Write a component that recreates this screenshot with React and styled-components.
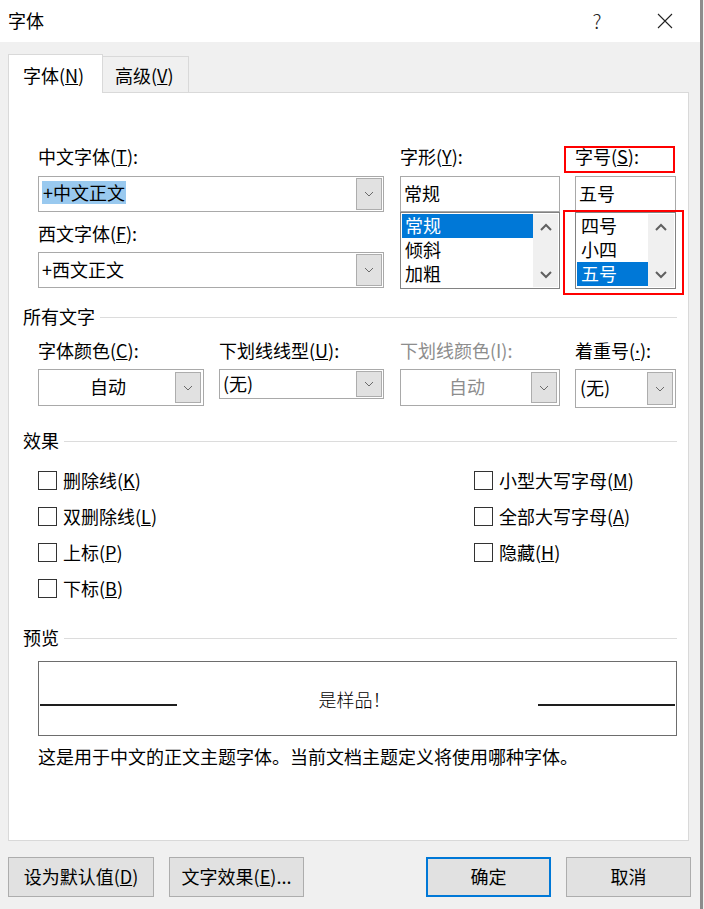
import React from "react";
import styled, { createGlobalStyle } from "styled-components";

const GlobalStyle = createGlobalStyle`
  html, body {
    margin: 0;
    padding: 0;
    background: #f0f0f0;
  }
  * {
    box-sizing: border-box;
  }
  body {
    font-family: "Noto Sans CJK SC", "Noto Sans", sans-serif;
    font-size: 18px;
    color: #000;
  }
`;

const Dialog = styled.div`
  width: 703px;
  height: 909px;
  background: #f0f0f0;
  border-right: 3px solid #8c8c8c;
  display: flex;
  flex-direction: column;
`;

const TitleBar = styled.div`
  height: 42px;
  background: #fff;
  display: flex;
  align-items: center;
  padding-left: 8px;
  line-height: 24px;
`;

const TitleText = styled.span`
  flex: 1;
  margin-top: -2px;
`;

const TitleButton = styled.div`
  width: ${({ $w }) => $w}px;
  display: flex;
  justify-content: center;
  align-items: center;
  font-size: 20px;
  font-weight: 300;
  color: #222;
  margin-right: ${({ $mr }) => $mr || 0}px;
`;

const TabRow = styled.div`
  display: flex;
  align-items: flex-end;
  height: 38px;
  margin-top: 12px;
  padding-left: 8px;
`;

const Tab = styled.div`
  position: relative;
  z-index: ${({ $active }) => ($active ? 1 : 0)};
  width: ${({ $active }) => ($active ? 95 : 86)}px;
  height: ${({ $active }) => ($active ? 39 : 36)}px;
  margin-bottom: ${({ $active }) => ($active ? -1 : 0)}px;
  background: ${({ $active }) => ($active ? "#fff" : "#f0f0f0")};
  border: 1px solid #d9d9d9;
  border-bottom: none;
  border-left: ${({ $active }) => ($active ? "1px solid #d9d9d9" : "none")};
  padding-top: ${({ $active }) => ($active ? 8 : 6)}px;
  padding-left: ${({ $active }) => ($active ? 14 : 12)}px;
  line-height: 24px;
`;

const Panel = styled.div`
  margin-left: 8px;
  width: 681px;
  height: 749px;
  background: #fff;
  border: 1px solid #d9d9d9;
  padding: 53px 11px 0 14px;
  display: flex;
  flex-direction: column;
`;

const Indent = styled.div`
  padding-left: 15px;
  margin-top: ${({ $mt }) => $mt || 0}px;
`;

const FontRow = styled.div`
  display: flex;
  align-items: flex-start;
`;

const Column = styled.div`
  position: relative;
  width: ${({ $w }) => $w}px;
  margin-right: ${({ $mr }) => $mr || 0}px;
  display: flex;
  flex-direction: column;
`;

const Label = styled.div`
  height: 24px;
  line-height: 20px;
  white-space: nowrap;
  color: ${({ $disabled }) => ($disabled ? "#8d8d8d" : "#000")};
  margin-top: ${({ $mt }) => $mt || 0}px;
  margin-bottom: ${({ $mb }) => $mb || 0}px;
`;

const Dot = styled.span`
  font-family: "Noto Sans", "DejaVu Sans", sans-serif;
  text-decoration: underline;
`;

const Combo = styled.div`
  height: ${({ $h }) => $h || 36}px;
  width: 100%;
  border: 1px solid #a9a9a9;
  background: #fff;
  display: flex;
  align-items: stretch;
  padding: ${({ $pad }) => $pad || 1}px;
  margin-top: ${({ $mt }) => $mt || 0}px;
`;

const ComboText = styled.div`
  flex: 1;
  display: flex;
  align-items: center;
  justify-content: ${({ $center }) => ($center ? "center" : "flex-start")};
  padding-left: ${({ $center }) => ($center ? 0 : 2)}px;
  padding-bottom: 3px;
  color: ${({ $disabled }) => ($disabled ? "#8d8d8d" : "#000")};
  line-height: 24px;
  white-space: nowrap;
`;

const Selected = styled.span`
  background: #99c9ef;
  padding: 0 1px;
  line-height: 23px;
`;

const DropButton = styled.div`
  width: 26px;
  background: #e1e1e1;
  border: 1px solid #adadad;
  display: flex;
  align-items: center;
  justify-content: center;
`;

const EditBox = styled.div`
  height: 36px;
  border: 1px solid #a9a9a9;
  background: #fff;
  display: flex;
  align-items: center;
  padding-left: ${({ $pl }) => $pl}px;
  padding-bottom: 3px;
  margin-top: 6px;
  line-height: 24px;
`;

const ListBox = styled.div`
  height: 77px;
  border: 1px solid #828282;
  background: #fff;
  padding: 1px;
  display: flex;
`;

const ListItems = styled.div`
  flex: 1;
  display: flex;
  flex-direction: column;
`;

const ListItem = styled.div`
  height: 24px;
  line-height: 22px;
  padding-left: ${({ $pl }) => $pl}px;
  background: ${({ $sel }) => ($sel ? "#0078d7" : "transparent")};
  color: ${({ $sel }) => ($sel ? "#fff" : "#000")};
`;

const ScrollBar = styled.div`
  width: ${({ $w }) => $w}px;
  background: #f0f0f0;
  display: flex;
  flex-direction: column;
  justify-content: space-between;
  align-items: center;
  padding: 9px 0 8px;
`;

const RedMark = styled.div`
  position: absolute;
  left: ${({ $l }) => $l}px;
  top: ${({ $t }) => $t}px;
  width: ${({ $w }) => $w}px;
  height: ${({ $h }) => $h}px;
  border: 2px solid #ff0000;
  pointer-events: none;
`;

const Heading = styled.div`
  display: flex;
  align-items: center;
  height: 24px;
  line-height: 20px;
  margin-top: ${({ $mt }) => $mt}px;
`;

const HeadingRule = styled.div`
  flex: 1;
  height: 1px;
  background: #dcdcdc;
  margin-left: 5px;
  margin-top: 2px;
`;

const OptionRow = styled.div`
  display: flex;
  align-items: flex-start;
`;

const OptionCol = styled.div`
  width: ${({ $w }) => $w}px;
  margin-right: ${({ $mr }) => $mr || 0}px;
  display: flex;
  flex-direction: column;
`;

const CheckGrid = styled.div`
  display: flex;
  margin-top: 10px;
`;

const CheckColumn = styled.div`
  width: ${({ $w }) => $w || "auto"};
  display: flex;
  flex-direction: column;
`;

const CheckRow = styled.label`
  height: 36px;
  display: flex;
  align-items: center;
  line-height: 24px;
`;

const CheckBox = styled.span`
  width: 19px;
  height: 19px;
  border: 1px solid #333;
  background: #fff;
  margin-right: 6px;
  flex-shrink: 0;
`;

const PreviewBox = styled.div`
  margin-top: 12px;
  height: 75px;
  border: 1px solid #6d6d6d;
  display: flex;
  align-items: center;
  padding: 0 1px;
`;

const PreviewRule = styled.div`
  width: 137px;
  height: 2px;
  background: #1e1e1e;
  margin-top: 12px;
`;

const PreviewText = styled.div`
  flex: 1;
  text-align: center;
  font-weight: 300;
  line-height: 24px;
  padding-right: 6px;
`;

const Description = styled.div`
  margin-top: 9px;
  line-height: 22px;
  white-space: nowrap;
`;

const Footer = styled.div`
  display: flex;
  margin-top: 16px;
  padding: 0 0 0 8px;
`;

const Button = styled.div`
  width: ${({ $w }) => $w}px;
  height: 40px;
  background: #e1e1e1;
  border: ${({ $primary }) => ($primary ? "2px solid #0078d7" : "1px solid #adadad")};
  display: flex;
  align-items: center;
  justify-content: center;
  line-height: 24px;
  padding-bottom: 2px;
  margin-right: ${({ $mr }) => $mr || 0}px;
  white-space: nowrap;
`;

const Chevron = () => (
  <svg width="10" height="6" viewBox="0 0 10 6">
    <polyline points="1,1 5,5 9,1" fill="none" stroke="#6a6a6a" strokeWidth="1" />
  </svg>
);

const ScrollArrow = ({ up }) => (
  <svg width="12" height="8" viewBox="0 0 12 8">
    <polyline
      points={up ? "1,7 6,2 11,7" : "1,1 6,6 11,1"}
      fill="none"
      stroke="#606060"
      strokeWidth="2"
    />
  </svg>
);

const CloseIcon = () => (
  <svg width="16" height="16" viewBox="0 0 16 16">
    <path d="M1 1 L15 15 M15 1 L1 15" stroke="#222" strokeWidth="1.1" fill="none" />
  </svg>
);

const Select = ({ children, h, center, disabled, pad, mt }) => (
  <Combo $h={h} $pad={pad} $mt={mt}>
    <ComboText $center={center} $disabled={disabled}>
      {children}
    </ComboText>
    <DropButton>
      <Chevron />
    </DropButton>
  </Combo>
);

const List = ({ items, selected, pl, bar }) => (
  <ListBox>
    <ListItems>
      {items.map((it) => (
        <ListItem key={it} $sel={it === selected} $pl={pl}>
          {it}
        </ListItem>
      ))}
    </ListItems>
    <ScrollBar $w={bar}>
      <ScrollArrow up />
      <ScrollArrow />
    </ScrollBar>
  </ListBox>
);

const Check = ({ children }) => (
  <CheckRow>
    <CheckBox />
    <span>{children}</span>
  </CheckRow>
);

export default function App() {
  return (
    <>
      <GlobalStyle />
      <Dialog>
        <TitleBar>
          <TitleText>字体</TitleText>
          <TitleButton $w={20} $mr={50}>?</TitleButton>
          <TitleButton $w={16} $mr={27}>
            <CloseIcon />
          </TitleButton>
        </TitleBar>

        <TabRow>
          <Tab $active>
            字体(<u>N</u>)
          </Tab>
          <Tab>
            高级(<u>V</u>)
          </Tab>
        </TabRow>

        <Panel>
          <Indent>
            <FontRow>
              <Column $w={346} $mr={16}>
                <Label $mb={6}>
                  中文字体(<u>T</u>):
                </Label>
                <Select>
                  <Selected>+中文正文</Selected>
                </Select>
                <Label $mt={11} $mb={5}>
                  西文字体(<u>F</u>):
                </Label>
                <Select>+西文正文</Select>
              </Column>

              <Column $w={160} $mr={15}>
                <Label>
                  字形(<u>Y</u>):
                </Label>
                <EditBox $pl={3}>常规</EditBox>
                <List items={["常规", "倾斜", "加粗"]} selected="常规" pl={3} bar={25} />
              </Column>

              <Column $w={101}>
                <Label>
                  字号(<u>S</u>):
                </Label>
                <EditBox $pl={3}>五号</EditBox>
                <List items={["四号", "小四", "五号"]} selected="五号" pl={4} bar={26} />
                <RedMark $l={-11} $t={0} $w={111} $h={27} />
                <RedMark $l={-12} $t={64} $w={121} $h={85} />
              </Column>
            </FontRow>
          </Indent>

          <Heading $mt={15}>
            所有文字
            <HeadingRule />
          </Heading>

          <Indent $mt={12}>
            <OptionRow>
              <OptionCol $w={166} $mr={15}>
                <Label $mb={5}>
                  字体颜色(<u>C</u>):
                </Label>
                <Select h={37} center pad={2}>
                  自动
                </Select>
              </OptionCol>
              <OptionCol $w={165} $mr={16}>
                <Label $mb={5}>
                  下划线线型(<u>U</u>):
                </Label>
                <Select h={30}>(无)</Select>
              </OptionCol>
              <OptionCol $w={160} $mr={15}>
                <Label $mb={5} $disabled>
                  下划线颜色(I):
                </Label>
                <Select h={37} center disabled pad={2}>
                  自动
                </Select>
              </OptionCol>
              <OptionCol $w={101}>
                <Label $mb={5}>
                  着重号(<Dot>·</Dot>):
                </Label>
                <Select h={39} pad={2}>
                  (无)
                </Select>
              </OptionCol>
            </OptionRow>
          </Indent>

          <Heading $mt={20}>
            效果
            <HeadingRule />
          </Heading>

          <Indent>
            <CheckGrid>
              <CheckColumn $w="436px">
                <Check>
                  删除线(<u>K</u>)
                </Check>
                <Check>
                  双删除线(<u>L</u>)
                </Check>
                <Check>
                  上标(<u>P</u>)
                </Check>
                <Check>
                  下标(<u>B</u>)
                </Check>
              </CheckColumn>
              <CheckColumn>
                <Check>
                  小型大写字母(<u>M</u>)
                </Check>
                <Check>
                  全部大写字母(<u>A</u>)
                </Check>
                <Check>
                  隐藏(<u>H</u>)
                </Check>
              </CheckColumn>
            </CheckGrid>
          </Indent>

          <Heading $mt={19}>
            预览
            <HeadingRule />
          </Heading>

          <Indent>
            <PreviewBox>
              <PreviewRule />
              <PreviewText>是样品！</PreviewText>
              <PreviewRule />
            </PreviewBox>
            <Description>这是用于中文的正文主题字体。当前文档主题定义将使用哪种字体。</Description>
          </Indent>
        </Panel>

        <Footer>
          <Button $w={146} $mr={15}>
            设为默认值(<u>D</u>)
          </Button>
          <Button $w={135} $mr={122}>
            文字效果(<u>E</u>)...
          </Button>
          <Button $w={125} $mr={15} $primary>
            确定
          </Button>
          <Button $w={125}>取消</Button>
        </Footer>
      </Dialog>
    </>
  );
}
